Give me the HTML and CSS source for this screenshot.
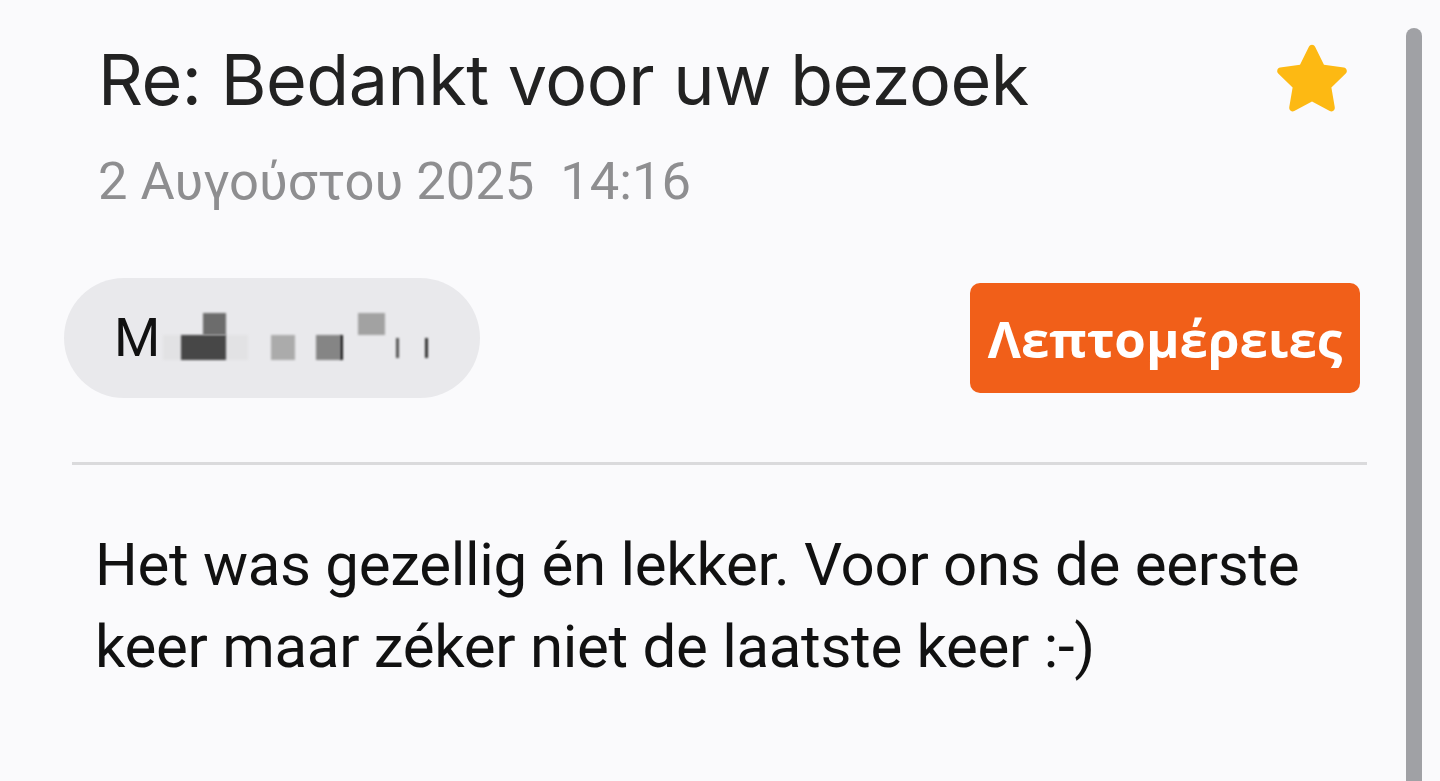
FILE: index.html
```html
<!DOCTYPE html>
<html lang="nl">
<head>
<meta charset="utf-8">
<title>Re: Bedankt voor uw bezoek</title>
<link rel="stylesheet" href="styles.css">
</head>
<body>
<div class="screen">
  <main class="mail">
    <header class="mail-head">
      <div class="head-text">
        <h1 class="subject">Re: Bedankt voor uw bezoek</h1>
        <div class="date">2 Αυγούστου 2025&nbsp;&nbsp;14:16</div>
      </div>
      <svg class="star" viewBox="0 0 24 24" width="90" height="90" aria-hidden="true">
        <path d="M12 2.6c.35 0 .67.2.82.52l2.37 4.8 5.3.77c.35.05.64.3.75.63.11.34.02.71-.24.95l-3.83 3.74.9 5.28c.06.35-.08.7-.37.9a.9.9 0 0 1-.96.07L12 17.76l-4.74 2.5a.9.9 0 0 1-.96-.07.92.92 0 0 1-.37-.9l.9-5.28L2.99 10.27a.93.93 0 0 1-.24-.95c.11-.33.4-.58.75-.63l5.3-.77 2.37-4.8c.16-.32.48-.52.83-.52z" fill="#fdb913"/>
      </svg>
    </header>
    <div class="sender-row">
      <div class="sender-chip">
        <span class="sender-initial">M</span>
        <span class="blur">
          <span class="blk b1"></span><span class="blk b2"></span><span class="blk b3"></span><span class="blk b4"></span><span class="blk b5"></span><span class="blk b6"></span><span class="blk b7"></span><span class="blk b8"></span><span class="blk b9"></span>
        </span>
      </div>
      <button class="details-btn">Λεπτομέρειες</button>
    </div>
    <hr class="divider">
    <p class="body-text">Het was gezellig én lekker. Voor ons de eerste keer maar zéker niet de laatste keer :-)</p>
  </main>
  <div class="scrollbar"></div>
</div>
</body>
</html>
```
FILE: styles.css
```css
html, body {
  margin: 0;
  padding: 0;
  background: #fafafc;
}
body {
  width: 1440px;
  height: 781px;
  overflow: hidden;
  font-family: Inter, "Noto Sans", sans-serif;
}
.screen {
  display: flex;
  height: 781px;
  overflow: hidden;
}
.mail {
  width: 1367px;
  padding: 0 0 0 72px;
  box-sizing: border-box;
}
.mail-head {
  display: flex;
  justify-content: space-between;
  align-items: flex-start;
  padding: 30px 0 0 26px;
}
.subject {
  margin: 0;
  font-family: Inter, sans-serif;
  font-weight: 400;
  font-size: 70px;
  line-height: 100px;
  color: #222222;
  letter-spacing: -0.5px;
}
.date {
  font-family: Roboto, sans-serif;
  font-size: 52.5px;
  line-height: 60px;
  color: #8e8e90;
  margin-top: 21px;
}
.star {
  margin-top: 5px;
  margin-right: 10px;
}
.sender-row {
  display: flex;
  justify-content: space-between;
  align-items: center;
  margin-top: 67px;
  margin-left: -8px;
}
.sender-chip {
  width: 416px;
  height: 120px;
  border-radius: 60px;
  background: #e9e9ec;
  display: flex;
  align-items: center;
  padding-left: 50px;
  box-sizing: border-box;
}
.sender-initial {
  font-family: Roboto, sans-serif;
  font-size: 53px;
  color: #111111;
}
.blur {
  display: inline-block;
  position: relative;
  width: 270px;
  height: 60px;
}
.blk {
  position: absolute;
  filter: blur(0.8px);
}
.b1 { left: 3px; top: 27px; width: 85px; height: 25px; background: #e2e2e4; }
.b2 { left: 21px; top: 27px; width: 45px; height: 25px; background: #474747; }
.b3 { left: 43px; top: 5px; width: 23px; height: 22px; background: #6c6c6c; }
.b4 { left: 111px; top: 27px; width: 24px; height: 25px; background: #ababab; }
.b5 { left: 156px; top: 27px; width: 24px; height: 25px; background: #858585; }
.b6 { left: 180px; top: 27px; width: 3px; height: 25px; background: #222; }
.b7 { left: 198px; top: 5px; width: 27px; height: 22px; background: #a2a2a2; }
.b8 { left: 236px; top: 30px; width: 3px; height: 20px; background: #555; }
.b9 { left: 265px; top: 30px; width: 3px; height: 20px; background: #333; }
.details-btn {
  width: 390px;
  height: 110px;
  margin-right: 7px;
  border: none;
  border-radius: 10px;
  background: #f15f19;
  color: #ffffff;
  font-family: "Open Sans", sans-serif;
  font-weight: 700;
  font-size: 51px;
  padding: 0;
}
.divider {
  border: none;
  height: 3px;
  background: #dadadc;
  margin: 64px 0 0 0;
}
.body-text {
  margin: 59px 0 0 23px;
  font-family: Roboto, sans-serif;
  font-size: 60px;
  line-height: 82px;
  letter-spacing: -0.3px;
  color: #111111;
  max-width: 1240px;
}
.scrollbar {
  width: 16px;
  margin: 28px 0 0 39px;
  align-self: stretch;
  border-radius: 8px 8px 0 0;
  background: #a0a1a5;
}
```
